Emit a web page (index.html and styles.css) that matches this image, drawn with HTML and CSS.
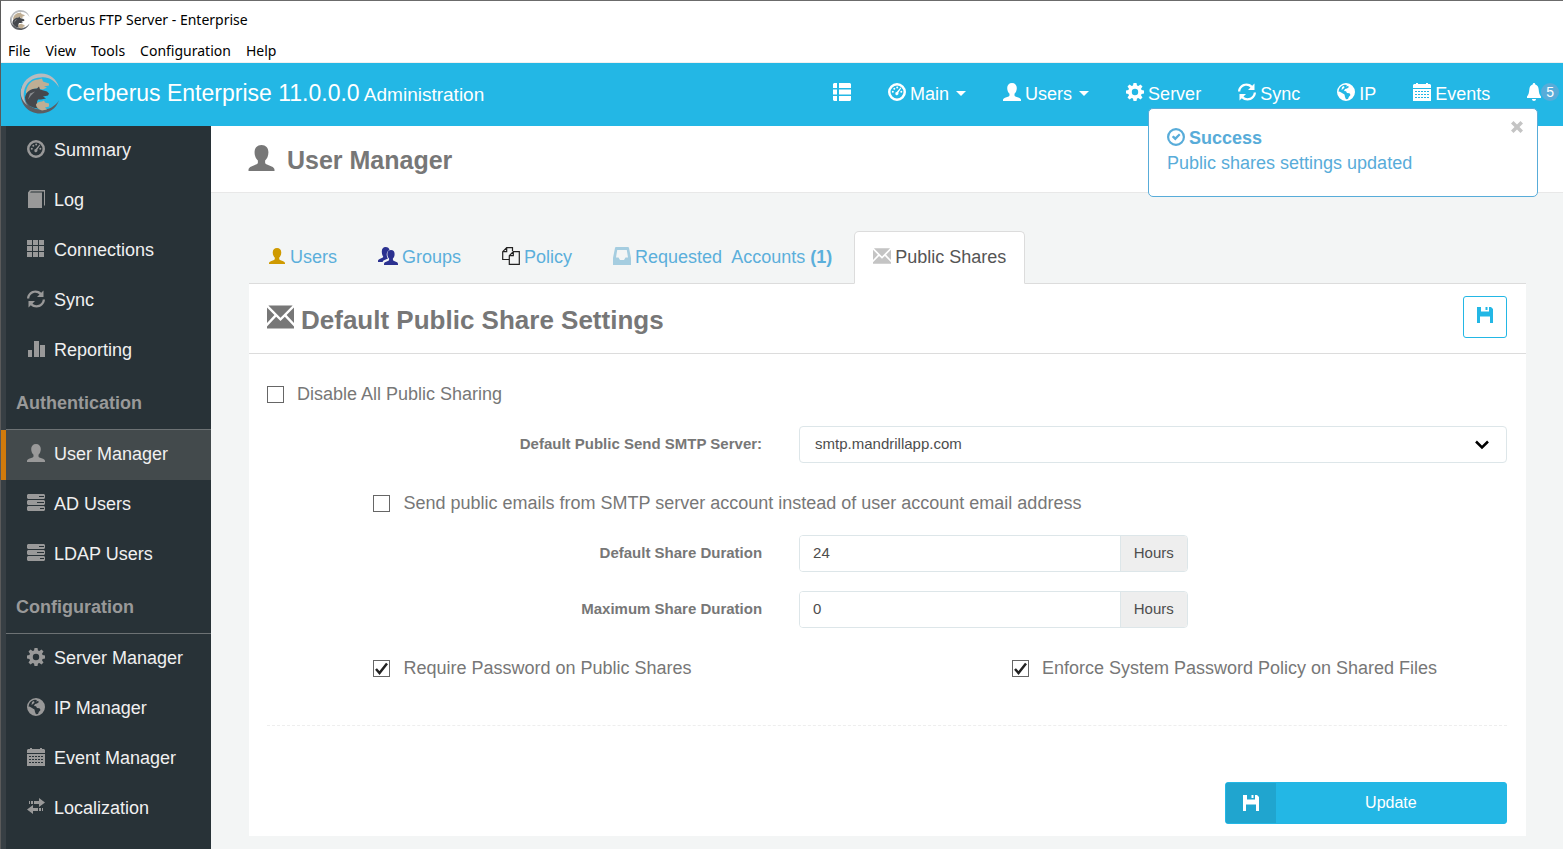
FILE: index.html
```html
<!DOCTYPE html>
<html lang="en">
<head>
  <meta charset="UTF-8" />
  <meta name="viewport" content="width=device-width, initial-scale=1.0"/>
  <title>Cerberus FTP Server - Enterprise</title>
  <link rel="stylesheet" href="styles.css">
</head>
<body>

  <!-- Icon sprite -->
  <svg class="sprite" aria-hidden="true">
    <symbol id="i-logo" viewBox="0 0 40 40">
      <path fill="#5b5e63" d="M2 12C-3 25 5 40 20 40c9 0 16-5 19-13-5 7-12 10-19 9C8 35 0 25 2 12z"/>
      <path fill="#b9bbbe" d="M1 16C4 5 13 0 21 0c9 0 16 6 18 14C35 7 28 3 21 4 12 4 6 9 4 18c-1 6 1 11 4 14C2 28 0 22 1 16z"/>
      <path fill="#bfae94" d="M6 18c1-7 6-12 12-12l4-1 1 3 6 2v2l-5 1 3 1-4 2-6-1c-4 0-7 2-11 5z"/>
      <path fill="#45484d" d="M5 24c1-6 6-9 12-9l2-2 1 3 7 2 2 2-1 2-5 1 3 2-5 1-3 0c-2 3-1 6 1 9C12 35 5 31 5 24z"/>
      <path fill="#8a8c90" d="M10 20l5-2-4 4-3 4z"/>
      <path fill="#bfae94" d="M16 31c1-2 3-3 6-3l2-1 1 2 4 1v3l-4 1 2 2-5 1c-3-1-6-3-6-6z"/>
    </symbol>
    <symbol id="i-list" viewBox="0 0 18 18">
      <path d="M1 0h3v5H0V1zM6 0h11l1 1v4H6zM0 6.500h4v5H0zM6 6.500h12v5H6zM0 13h4v5H1l-1-1zM6 13h12v4l-1 1H6z"/>
    </symbol>
    <symbol id="i-gauge" viewBox="0 0 18 18">
      <path fill-rule="evenodd" d="M9 0a9 9 0 1 0 0 18A9 9 0 0 0 9 0zm0 2.500a6.500 6.500 0 1 1 0 13 6.500 6.500 0 0 1 0-13z"/>
      <path d="M12.500 4.500l.8.600-3 4.600a1.600 1.600 0 1 1-1.600-.800z"/>
      <circle cx="4.800" cy="8.800" r="1"/><circle cx="6.300" cy="5.800" r="1"/><circle cx="9.200" cy="4.500" r="1"/><circle cx="13.300" cy="8.800" r="1"/>
    </symbol>
    <symbol id="i-user" viewBox="0 0 18 18">
      <path d="M9 0c3 0 4.800 2 4.800 5 0 2.500-1 4.600-2.300 5.800v1.400c0 .6.300 1 .9 1.200l3.600 1.400c1.200.5 2 1.300 2 2.300V18H0v-.9c0-1 .8-1.800 2-2.300l3.600-1.400c.6-.2.900-.6.900-1.200v-1.400C5.200 9.600 4.200 7.500 4.200 5 4.200 2 6 0 9 0z"/>
    </symbol>
    <symbol id="i-users" viewBox="0 0 20 18">
      <path d="M7.500 0c2.300 0 3.700 1.200 4 3-1.800.8-2.800 2.400-2.800 4.500 0 1.700.5 3 1.300 4L5.500 13.500 4.500 15H0v-1c0-1 .6-1.500 1.600-2l2.800-1.300c.6-.3.800-.6.800-1.100C4.300 8.400 3.800 6.400 3.800 4.500 3.800 1.700 5.300 0 7.500 0z"/>
      <path d="M13 3c2.300 0 3.600 1.600 3.600 4 0 2-.7 3.700-1.700 4.600v1c0 .6.200.9.700 1.100l2.800 1.200c1 .4 1.600 1.200 1.600 2.100v1H6v-1c0-.9.600-1.700 1.600-2.100l2.800-1.200c.5-.2.700-.5.700-1.100v-1C10.100 10.700 9.400 9 9.400 7c0-2.400 1.300-4 3.600-4z"/>
    </symbol>
    <symbol id="i-cog" viewBox="0 0 18 18">
      <path fill-rule="evenodd" d="M7.500 0h3l.5 2.500 1.300.6 2.200-1.500 2 2-1.500 2.200.6 1.300 2.400.4v3l-2.400.5-.6 1.300 1.500 2.200-2 2-2.200-1.500-1.300.6-.5 2.400h-3L7 15.600l-1.300-.6-2.200 1.500-2-2L3 12.300 2.400 11 0 10.500v-3l2.400-.4L3 5.800 1.500 3.600l2-2 2.200 1.500L7 2.500zM9 5.800a3.200 3.200 0 1 0 0 6.400 3.200 3.200 0 0 0 0-6.400z"/>
    </symbol>
    <symbol id="i-sync" viewBox="0 0 18 18">
      <path d="M0 8.500C.3 3.800 4 .5 8.500.5c2.200 0 4.200.8 5.700 2.200L16.500.5V7H10l2.500-2.600A6.100 6.100 0 0 0 8.600 2.800C5 2.800 2.500 5.300 2.300 8.500z"/>
      <path d="M18 9.500c-.3 4.700-4 8-8.500 8-2.200 0-4.200-.8-5.700-2.200l-2.300 2.200V11H8l-2.500 2.600c1 .9 2.400 1.600 3.900 1.600 3.600 0 6.100-2.500 6.300-5.700z"/>
    </symbol>
    <symbol id="i-globe" viewBox="0 0 18 18">
      <path fill-rule="evenodd" d="M9 0a9 9 0 1 0 0 18A9 9 0 0 0 9 0zM8 1.700l2 .3-1 1.500 2-.5 1 1-2 1.500-2 .5L7 8l2 .2 1 1.800 2.500.3 1 1.700-1.700 2-.8 2-2 .3L8 14l-.5-2.500L5 10 2.500 8.500 1.700 9C1.600 5 4.300 2.200 8 1.700z"/>
      <path d="M5 4l2-1 .5 1.500L6 6 4.500 7z"/>
    </symbol>
    <symbol id="i-calendar" viewBox="0 0 18 18">
      <path d="M1 1h2V0h2v1h8V0h2v1h2l1 1v3H0V2z"/>
      <path fill-rule="evenodd" d="M0 6h18v12H0zM2 8v1h2V8zm3 0v1h2V8zm3 0v1h2V8zm3 0v1h2V8zm3 0v1h2V8zM2 11v1h2v-1zm3 0v1h2v-1zm3 0v1h2v-1zm3 0v1h2v-1zm3 0v1h2v-1zM2 14v1h2v-1zm3 0v1h2v-1zm3 0v1h2v-1zm3 0v1h2v-1zm3 0v1h2v-1z"/>
    </symbol>
    <symbol id="i-bell" viewBox="0 0 14 18">
      <path d="M7 0c.9 0 1.300.6 1.300 1.500C10.500 2 11.500 4 11.700 6.500c.2 3 .7 5 2.300 7V15H0v-1.500c1.600-2 2.100-4 2.300-7C2.500 4 3.500 2 5.700 1.500 5.700.6 6.100 0 7 0zM5 16h4c0 1.200-.8 2-2 2s-2-.8-2-2z"/>
    </symbol>
    <symbol id="i-book" viewBox="0 0 18 18">
      <path d="M1 2.500L3 0h15v15l-1 1V1.500H4l-1 1h12V18H1z"/>
    </symbol>
    <symbol id="i-grid" viewBox="0 0 18 18">
      <path d="M0 0h5v5H0zM6 0h5v5H6zM12 0h5v5h-5zM0 6h5v5H0zM6 6h5v5H6zM12 6h5v5h-5zM0 12h5v5H0zM6 12h5v5H6zM12 12h5v5h-5z"/>
    </symbol>
    <symbol id="i-chart" viewBox="0 0 18 18">
      <path d="M1 10h4v7H1zM7 1h5v16H7zM13 5h5v12h-5z"/>
    </symbol>
    <symbol id="i-servers" viewBox="0 0 18 18">
      <path fill-rule="evenodd" d="M1 0h16l1 1v3l-1 1H1L0 4V1zm11 2v1h5V2zM1 6h16l1 1v3l-1 1H1l-1-1V7zm9 2v1h7V8zM1 12h16l1 1v3l-1 1H1l-1-1v-3zm12 2v1h4v-1z"/>
    </symbol>
    <symbol id="i-transfer" viewBox="0 0 18 18">
      <path d="M2 3h1v3H2zM4 3h2v3H4zM7 3h5V0l6 4.500L12 9V6H7zM16 10h-1v3h1zM14 10h-2v3h2zM11 10H6V7l-6 4.500L6 16v-3h5z"/>
    </symbol>
    <symbol id="i-copy" viewBox="0 0 18 18">
      <path fill="none" stroke="currentColor" stroke-width="1.200" d="M7 12.500H.7V4.700L4.700.7h5.800V4M4.700.7v4h-4M7.300 8.700l4-4h6v12.600h-10zM11.300 4.700v4h-4"/>
    </symbol>
    <symbol id="i-inbox" viewBox="0 0 18 18">
      <path fill-rule="evenodd" d="M3 0h12c.6 0 .9.300 1 .9L18 11v7H0v-7L2 .9C2.100.3 2.400 0 3 0zm1.200 3L3 10.500h2.500L7 13h4l1.500-2.500H15L13.800 3z"/>
    </symbol>
    <symbol id="i-mail" viewBox="0 0 20 17">
      <path d="M1 0h18l-9 9zM0 1.500L5.500 7 0 13zM20 1.500L14.500 7 20 13zM0 15.500L6.800 8.400 10 11.500l3.200-3.100L20 15.500V17H0z"/>
    </symbol>
    <symbol id="i-save" viewBox="0 0 16 16">
      <path d="M0 0h4v4.500h8V0h2l2 2v14h-3V9.500H3V16H0zM8.500 0h2v3h-2z"/>
    </symbol>
    <symbol id="i-ok" viewBox="0 0 18 18">
      <path fill-rule="evenodd" d="M9 0a9 9 0 1 0 0 18A9 9 0 0 0 9 0zm0 2.200a6.800 6.800 0 1 1 0 13.600A6.800 6.800 0 0 1 9 2.200z"/>
      <path d="M4.800 9l1.700-1.600 1.800 1.700L12 5.500 13.500 7l-5.200 5.400z"/>
    </symbol>
    <symbol id="i-close" viewBox="0 0 12 12">
      <path d="M0 2.500L2.500 0 6 3.500 9.500 0 12 2.500 8.500 6 12 9.500 9.500 12 6 8.500 2.500 12 0 9.500 3.500 6z"/>
    </symbol>
  </svg>

  <header class="window-bar">
    <div class="window-title">
      <svg class="window-logo"><use href="#i-logo"/></svg>
      Cerberus FTP Server - Enterprise
    </div>
    <nav class="window-menu">
      <button type="button">File</button>
      <button type="button">View</button>
      <button type="button">Tools</button>
      <button type="button">Configuration</button>
      <button type="button">Help</button>
    </nav>
  </header>

  <div class="navbar">
    <a class="brand" href="#">
      <svg class="brand-logo"><use href="#i-logo"/></svg>
      <span>Cerberus Enterprise 11.0.0.0<small> Administration</small></span>
    </a>
    <nav class="nav-links">
      <a href="#" aria-label="Menu"><svg class="icon"><use href="#i-list"/></svg></a>
      <a href="#"><svg class="icon"><use href="#i-gauge"/></svg>Main<span class="caret"></span></a>
      <a href="#"><svg class="icon"><use href="#i-user"/></svg>Users<span class="caret"></span></a>
      <a href="#"><svg class="icon"><use href="#i-cog"/></svg>Server</a>
      <a href="#"><svg class="icon"><use href="#i-sync"/></svg>Sync</a>
      <a href="#"><svg class="icon"><use href="#i-globe"/></svg>IP</a>
      <a href="#"><svg class="icon"><use href="#i-calendar"/></svg>Events</a>
      <a class="alerts" href="#" aria-label="Alerts"><svg class="icon icon-bell"><use href="#i-bell"/></svg><span class="badge">5</span></a>
    </nav>
  </div>

  <div class="layout">
    <nav class="sidebar">
      <a href="#"><svg class="icon"><use href="#i-gauge"/></svg>Summary</a>
      <a href="#"><svg class="icon"><use href="#i-book"/></svg>Log</a>
      <a href="#"><svg class="icon"><use href="#i-grid"/></svg>Connections</a>
      <a href="#"><svg class="icon"><use href="#i-sync"/></svg>Sync</a>
      <a href="#"><svg class="icon"><use href="#i-chart"/></svg>Reporting</a>
      <h3>Authentication</h3>
      <a class="active" href="#"><svg class="icon"><use href="#i-user"/></svg>User Manager</a>
      <a href="#"><svg class="icon"><use href="#i-servers"/></svg>AD Users</a>
      <a href="#"><svg class="icon"><use href="#i-servers"/></svg>LDAP Users</a>
      <h3>Configuration</h3>
      <a href="#"><svg class="icon"><use href="#i-cog"/></svg>Server Manager</a>
      <a href="#"><svg class="icon"><use href="#i-globe"/></svg>IP Manager</a>
      <a href="#"><svg class="icon"><use href="#i-calendar"/></svg>Event Manager</a>
      <a href="#"><svg class="icon"><use href="#i-transfer"/></svg>Localization</a>
    </nav>

    <main class="main">
      <h1 class="page-title"><svg class="icon-lg"><use href="#i-user"/></svg>User Manager</h1>

      <div class="content">
        <nav class="tabs">
          <a href="#"><svg class="icon icon-gold"><use href="#i-user"/></svg>Users</a>
          <a href="#"><svg class="icon icon-navy"><use href="#i-users"/></svg>Groups</a>
          <a href="#"><svg class="icon icon-dark"><use href="#i-copy"/></svg>Policy</a>
          <a href="#"><svg class="icon icon-pale"><use href="#i-inbox"/></svg><span>Requested&nbsp; Accounts <b>(1)</b></span></a>
          <a class="active" href="#"><svg class="icon icon-gray"><use href="#i-mail"/></svg>Public Shares</a>
        </nav>

        <section class="panel">
          <div class="panel-head">
            <h2><svg class="icon-lg"><use href="#i-mail"/></svg>Default Public Share Settings</h2>
            <button type="button" class="btn-save" aria-label="Save"><svg><use href="#i-save"/></svg></button>
          </div>

          <form class="panel-body">
            <div class="row check-row">
              <label class="check col-full"><input type="checkbox">Disable All Public Sharing</label>
            </div>
            <div class="row">
              <label class="field-label" for="smtp">Default Public Send SMTP Server:</label>
              <div class="col-wide">
                <select id="smtp">
                  <option>smtp.mandrillapp.com</option>
                </select>
              </div>
            </div>
            <div class="row check-row">
              <label class="check col-indent-full"><input type="checkbox">Send public emails from SMTP server account instead of user account email address</label>
            </div>
            <div class="row">
              <label class="field-label" for="defDuration">Default Share Duration</label>
              <div class="col-field input-group">
                <input type="text" id="defDuration" value="24">
                <span class="addon">Hours</span>
              </div>
            </div>
            <div class="row">
              <label class="field-label" for="maxDuration">Maximum Share Duration</label>
              <div class="col-field input-group">
                <input type="text" id="maxDuration" value="0">
                <span class="addon">Hours</span>
              </div>
            </div>
            <div class="row check-row">
              <label class="check col-indent"><input type="checkbox" checked>Require Password on Public Shares</label>
              <label class="check col-right"><input type="checkbox" checked>Enforce System Password Policy on Shared Files</label>
            </div>
            <hr>
            <div class="row">
              <div class="col-button">
                <button type="button" class="btn-update">
                  <span class="btn-icon"><svg><use href="#i-save"/></svg></span>
                  <span class="btn-text">Update</span>
                </button>
              </div>
            </div>
          </form>
        </section>
      </div>
    </main>
  </div>

  <div class="toast" role="status">
    <button type="button" class="toast-close" aria-label="Close"><svg><use href="#i-close"/></svg></button>
    <div class="toast-title"><svg class="icon"><use href="#i-ok"/></svg>Success</div>
    <div>Public shares settings updated</div>
  </div>

</body>
</html>
```
FILE: styles.css
```css
* {
  box-sizing: border-box;
}

body {
  margin: 0;
  min-height: 100vh;
  display: flex;
  flex-direction: column;
  position: relative;
  border-top: 1px solid #6b6b6b;
  border-left: 1px solid #5a5a5a;
  background: #f3f5f5;
  color: #777;
  font-family: "Liberation Sans", Arial, sans-serif;
  font-size: 18px;
  line-height: 26px;
}

a {
  text-decoration: none;
  color: inherit;
}

button,
input,
select {
  font-family: inherit;
}

svg {
  fill: currentColor;
}

.sprite {
  position: absolute;
  width: 0;
  height: 0;
}

.icon {
  width: 18px;
  height: 18px;
  flex: none;
}

.icon-lg {
  width: 27px;
  height: 26px;
  flex: none;
}

/* Window title and menu */
.window-bar {
  background: #fff;
  color: #000;
  font-family: "Noto Sans", "Open Sans", sans-serif;
  font-size: 14px;
  border-bottom: 1px solid #f0f0f0;
}

.window-title {
  display: flex;
  align-items: center;
  gap: 5px;
  height: 37px;
  padding-left: 9px;
}

.window-logo {
  width: 20px;
  height: 20px;
}

.window-menu {
  display: flex;
  gap: 15px;
  height: 24px;
  padding-left: 7px;
}

.window-menu button {
  padding: 0;
  border: none;
  background: none;
  color: #000;
  font-size: 14px;
}

/* Top navigation */
.navbar {
  display: flex;
  justify-content: space-between;
  height: 63px;
  padding: 0 4px 2px 19px;
  background: #23b7e5;
  color: #fff;
}

.brand {
  display: flex;
  align-items: center;
  gap: 6px;
  font-size: 23px;
  white-space: nowrap;
}

.brand small {
  font-size: 19px;
}

.brand-logo {
  width: 40px;
  height: 41px;
}

.nav-links {
  display: flex;
  align-items: center;
  gap: 37px;
}

.nav-links a {
  display: flex;
  align-items: center;
  gap: 4px;
}

.nav-links .icon {
  margin-bottom: 3px;
}

.nav-links .alerts {
  gap: 0;
  align-items: flex-start;
}

.nav-links .icon-bell {
  width: 14px;
}

.caret {
  margin-left: 3px;
  border-top: 5px solid;
  border-left: 5px solid transparent;
  border-right: 5px solid transparent;
}

.badge {
  padding: 0 5px;
  border-radius: 9px;
  background: #58acd9;
  font-size: 14px;
  line-height: 18px;
}

/* Sidebar */
.layout {
  display: flex;
  flex: 1;
}

.sidebar {
  width: 210px;
  flex: none;
  border-left: 5px solid #373f44;
  background: #283237;
  color: #f0f0f0;
}

.sidebar a {
  display: flex;
  align-items: center;
  gap: 9px;
  height: 50px;
  padding: 0 0 2px 21px;
}

.sidebar .icon {
  margin-bottom: 3px;
  color: #999;
}

.sidebar .active {
  margin-left: -5px;
  border-left: 5px solid #cf7a0c;
  background: #434a4c;
}

.sidebar h3 {
  margin: 0;
  padding: 14px 0 13px 10px;
  border-bottom: 1px solid #6d7274;
  color: #999;
  font-size: 18px;
}

/* Page */
.main {
  flex: 1;
  min-width: 0;
}

.page-title {
  display: flex;
  align-items: center;
  gap: 12px;
  height: 67px;
  margin: 0;
  padding: 2px 37px 0;
  border-bottom: 1px solid #e8e8e8;
  background: #fff;
  font-size: 25px;
}

.page-title .icon-lg {
  margin-bottom: 4px;
}

.content {
  padding: 38px 37px 12px 38px;
}

.tabs {
  display: flex;
  gap: 3px;
  border-bottom: 1px solid #dcdcdc;
  color: #5bafdb;
}

.tabs a {
  display: flex;
  align-items: center;
  gap: 4px;
  height: 52px;
  margin-bottom: -1px;
  padding: 0 18px;
  border: 1px solid transparent;
  border-radius: 5px 5px 0 0;
  white-space: nowrap;
}

.tabs .icon {
  margin-bottom: 2px;
}

.tabs .active {
  height: 53px;
  padding-bottom: 1px;
  border-color: #dcdcdc #dcdcdc #fff;
  background: #fff;
  color: #555;
}

.tabs .icon-gold {
  height: 16px;
}

.tabs .icon-navy {
  width: 20px;
}

.icon-gold { color: #cf9a00; }
.icon-navy { color: #2b3190; }
.icon-dark { color: #222; }
.icon-pale { color: #a5cde0; }
.icon-gray { color: #c4c4c4; }

.panel {
  background: #fff;
}

.panel-head {
  display: flex;
  align-items: center;
  justify-content: space-between;
  height: 70px;
  padding: 0 19px 0 18px;
  border-bottom: 1px solid #dcdcdc;
}

.panel-head h2 {
  display: flex;
  align-items: center;
  gap: 7px;
  margin: 2px 0 0;
  font-size: 26px;
}

.panel-head .icon-lg {
  margin-bottom: 6px;
}

.btn-save {
  width: 44px;
  height: 42px;
  margin-bottom: 4px;
  padding: 0;
  border: 1px solid #23b7e5;
  border-radius: 3px;
  background: #fff;
  color: #23b7e5;
}

.btn-save svg,
.btn-icon svg {
  width: 16px;
  height: 16px;
}

/* Settings form */
.panel-body {
  padding: 19px 0 12px;
}

.row {
  display: grid;
  grid-template-columns: repeat(12, 1fr);
  margin-bottom: 19px;
}

.row > * {
  margin: 0 19px 0 18px;
}

.check-row {
  padding-top: 8px;
}

.col-full { grid-column: 1 / 13; }
.col-indent-full { grid-column: 2 / 13; }
.col-indent { grid-column: 2 / 8; }
.col-right { grid-column: 8 / 13; }
.col-wide { grid-column: 6 / 13; }
.col-field { grid-column: 6 / 10; }
.col-button { grid-column: 10 / 13; }

.check {
  display: flex;
  align-items: center;
  gap: 13px;
}

.check input {
  appearance: none;
  flex: none;
  width: 17px;
  height: 17px;
  margin: 1px 0 0;
  border: 1px solid #666;
  background: #fff;
}

.check input:checked {
  background: url("data:image/svg+xml,%3Csvg xmlns='http://www.w3.org/2000/svg' viewBox='0 0 15 15'%3E%3Cpath d='M2 8l3.500 4L13 2.500' fill='none' stroke='%23222' stroke-width='2.500'/%3E%3C/svg%3E") center / 15px no-repeat;
}

.field-label {
  grid-column: 1 / 6;
  padding-top: 5px;
  font-size: 15px;
  font-weight: bold;
  text-align: right;
}

select,
.input-group {
  height: 37px;
  border: 1px solid #dde6e9;
  border-radius: 4px;
  background: #fff;
  color: #4d4d4d;
  font-size: 15px;
}

select {
  display: block;
  width: 100%;
  padding: 0 15px 2px;
  appearance: none;
  background: #fff url("data:image/svg+xml,%3Csvg xmlns='http://www.w3.org/2000/svg' viewBox='0 0 14 10'%3E%3Cpath d='M1 1.500l6 6 6-6' fill='none' stroke='%23000' stroke-width='2.500'/%3E%3C/svg%3E") right 17px center / 14px 10px no-repeat;
}

.input-group {
  display: flex;
  overflow: hidden;
}

.input-group input {
  flex: 1;
  min-width: 0;
  padding: 0 13px 2px;
  border: none;
  color: #4d4d4d;
  font-size: 15px;
}

.addon {
  padding: 4px 13px;
  border-left: 1px solid #dde6e9;
  background: #eee;
}

hr {
  margin: 44px 19px 56px 18px;
  border: none;
  border-top: 1px dashed #eee;
}

.panel-body .row:last-child {
  margin-bottom: 0;
}

.btn-update {
  display: flex;
  width: 100%;
  height: 42px;
  padding: 0;
  border: 1px solid #23b7e5;
  border-radius: 3px;
  background: #23b7e5;
  color: #fff;
  font-size: 16px;
}

.btn-icon {
  display: grid;
  place-items: center;
  width: 50px;
  height: 40px;
  background: #20a5cf;
}

.btn-text {
  flex: 1;
  align-self: center;
}

/* Notification */
.toast {
  position: absolute;
  top: 107px;
  right: 25px;
  width: 390px;
  height: 89px;
  padding: 17px 18px;
  border: 1px solid #58acd9;
  border-radius: 5px;
  background: #fff;
  color: #58acd9;
  line-height: 25px;
}

.toast-title {
  display: flex;
  align-items: center;
  gap: 4px;
  font-weight: bold;
}

.toast-title .icon {
  margin-bottom: 3px;
}

.toast-close {
  position: absolute;
  top: 12px;
  right: 14px;
  width: 12px;
  height: 12px;
  padding: 0;
  border: none;
  background: none;
  color: #c4c4c4;
}

.toast-close svg {
  display: block;
  width: 12px;
  height: 12px;
}
```
